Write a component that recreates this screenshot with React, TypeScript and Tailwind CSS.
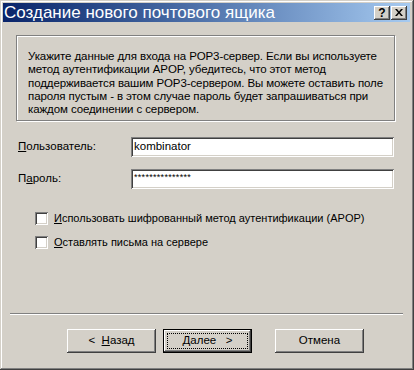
import * as React from "react";

// Classic Windows 2000 style "new mailbox" wizard page

const font = "font-['Liberation_Sans',Arial,sans-serif]";

function Raised({ children, isDefault }: { children: React.ReactNode; isDefault?: boolean }) {
  if (isDefault) {
    return (
      <div className="w-[89px] h-[24px] border border-black bg-[#d4d0c8]">
        <div className="w-full h-full flex items-center justify-center p-[3px] shadow-[inset_-1px_-1px_#404040,inset_1px_1px_#fff,inset_-2px_-2px_#808080]">
          <div className="w-full h-full flex items-center justify-center outline outline-1 outline-dotted outline-black -outline-offset-1">
            {children}
          </div>
        </div>
      </div>
    );
  }
  return (
    <div className="w-[89px] h-[24px] flex items-center justify-center bg-[#d4d0c8] shadow-[inset_-1px_-1px_#404040,inset_1px_1px_#fff,inset_-2px_-2px_#808080,inset_2px_2px_#d4d0c8]">
      {children}
    </div>
  );
}

function TitleButton({ children }: { children: React.ReactNode }) {
  return (
    <div className="w-[16px] h-[14px] flex items-center justify-center bg-[#d4d0c8] shadow-[inset_-1px_-1px_#404040,inset_1px_1px_#fff,inset_-2px_-2px_#808080] text-black font-bold text-[12px] leading-none">
      {children}
    </div>
  );
}

function Checkbox({ children }: { children: React.ReactNode }) {
  return (
    <div className="flex items-center h-[13px]">
      <div className="w-[13px] h-[13px] bg-white shadow-[inset_1px_1px_#808080,inset_-1px_-1px_#fff,inset_2px_2px_#404040,inset_-2px_-2px_#d4d0c8]" />
      <span className="ml-[6px] text-[11px] leading-[13px]">{children}</span>
    </div>
  );
}

function Field({ value, small }: { value: string; small?: boolean }) {
  return (
    <div className="w-[263px] h-[20px] bg-white flex items-center pl-[3px] shadow-[inset_1px_1px_#808080,inset_-1px_-1px_#fff,inset_2px_2px_#404040,inset_-2px_-2px_#d4d0c8]">
      <span className={small ? "text-[9px] leading-none tracking-[0.3px] -mt-[3px]" : "text-[11.5px] leading-none"}>{value}</span>
    </div>
  );
}

export default function App() {
  return (
    <div className={`w-[414px] h-[370px] bg-[#d4d0c8] text-black ${font} flex flex-col pl-[3px] pr-[4px] pt-[3px] pb-[2px] shadow-[inset_-1px_-1px_#404040,inset_1px_1px_#d4d0c8,inset_-2px_-2px_#808080,inset_2px_2px_#fff]`}>
      {/* Title bar */}
      <div className="h-[19px] flex items-center bg-gradient-to-r from-[#0a246a] to-[#a6caf0] pl-[1px] pr-[3px]">
        <span className="text-white text-[17px] leading-none whitespace-nowrap">Создание нового почтового ящика</span>
        <div className="ml-auto flex gap-[1px]">
          <TitleButton>?</TitleButton>
          <TitleButton>
            <svg width="8" height="7" viewBox="0 0 8 7">
              <path d="M0 0h2l2 2.5L6 0h2L5 3.5 8 7H6L4 4.5 2 7H0l3-3.5z" fill="#000" />
            </svg>
          </TitleButton>
        </div>
      </div>

      {/* Info frame */}
      <div className="mt-[13px] ml-[13px] w-[379px] h-[86px] border border-[#808080] shadow-[inset_1px_1px_#fff,1px_1px_#fff] pl-[11px] pt-[14px]">
        <p className="text-[11.5px] leading-[13.25px] whitespace-nowrap tracking-[-0.1px]">
          Укажите данные для входа на POP3-сервер. Если вы используете
          <br />
          метод аутентификации APOP, убедитесь, что этот метод
          <br />
          поддерживается вашим POP3-сервером. Вы можете оставить поле
          <br />
          пароля пустым - в этом случае пароль будет запрашиваться при
          <br />
          каждом соединении с сервером.
        </p>
      </div>

      {/* Fields */}
      <div className="mt-[16px] ml-[15px] flex flex-col gap-[12px]">
        <div className="flex items-center">
          <span className="w-[113px] text-[11.5px]">
            <span className="underline">П</span>ользователь:
          </span>
          <Field value="kombinator" />
        </div>
        <div className="flex items-center">
          <span className="w-[113px] text-[11.5px]">
            П<span className="underline">а</span>роль:
          </span>
          <Field value="***************" small />
        </div>
      </div>

      {/* Checkboxes */}
      <div className="mt-[23px] ml-[32px] flex flex-col gap-[11px]">
        <Checkbox>
          <span className="underline">И</span>спользовать шифрованный метод аутентификации (APOP)
        </Checkbox>
        <Checkbox>
          <span className="underline">О</span>ставлять письма на сервере
        </Checkbox>
      </div>

      <div className="flex-1" />

      {/* Separator */}
      <div className="mx-[7px] border-t border-[#808080] border-b border-b-white" />

      {/* Buttons */}
      <div className="mt-[14px] mb-[15px] ml-[64px] flex items-center text-[11.5px]">
        <Raised>
          <span className="whitespace-pre">&lt;  <span className="underline">Н</span>азад</span>
        </Raised>
        <div className="ml-[7px]">
          <Raised isDefault>
            <span className="whitespace-pre"><span className="underline">Д</span>алее   &gt;</span>
          </Raised>
        </div>
        <div className="ml-[23px]">
          <Raised>Отмена</Raised>
        </div>
      </div>
    </div>
  );
}
